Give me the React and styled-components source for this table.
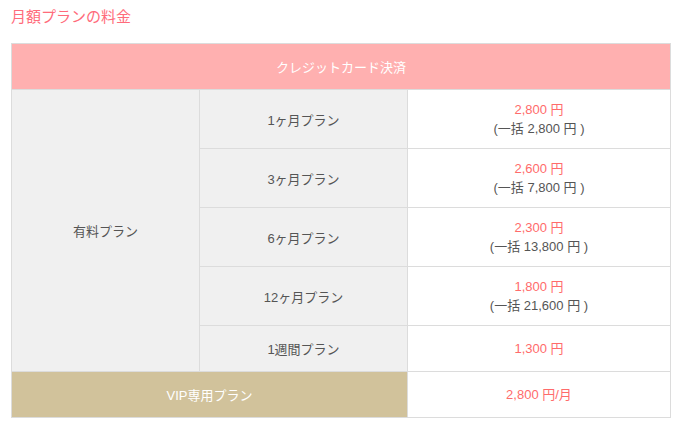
import React from 'react';
import styled, { createGlobalStyle } from 'styled-components';

const GlobalStyle = createGlobalStyle`
    body {
        margin: 0;
        background: #fff;
        font-family: "Liberation Sans", "Noto Sans CJK JP", sans-serif;
    }
`;

const plans = [
    { name: '1ヶ月プラン', price: '2,800 円', total: '(一括 2,800 円 )' },
    { name: '3ヶ月プラン', price: '2,600 円', total: '(一括 7,800 円 )' },
    { name: '6ヶ月プラン', price: '2,300 円', total: '(一括 13,800 円 )' },
    { name: '12ヶ月プラン', price: '1,800 円', total: '(一括 21,600 円 )' },
    { name: '1週間プラン', price: '1,300 円' },
];

const App = () => {
    return (
        <>
            <GlobalStyle />
            <Wrapper>
                <Title>月額プランの料金</Title>
                <PriceTable>
                    <colgroup>
                        <col style={{ width: 188 }} />
                        <col style={{ width: 208 }} />
                        <col />
                    </colgroup>
                    <tbody>
                        <tr>
                            <HeadCell colSpan={3}>クレジットカード決済</HeadCell>
                        </tr>
                        {plans.map((p, i) => (
                            <Row key={p.name} $short={!p.total}>
                                {i === 0 && <GrayCell rowSpan={plans.length}>有料プラン</GrayCell>}
                                <GrayCell>{p.name}</GrayCell>
                                <PriceCell>
                                    <Price>{p.price}</Price>
                                    {p.total && <Total>{p.total}</Total>}
                                </PriceCell>
                            </Row>
                        ))}
                        <Row $short>
                            <VipCell colSpan={2}>VIP専用プラン</VipCell>
                            <PriceCell>
                                <Price>2,800 円/月</Price>
                            </PriceCell>
                        </Row>
                    </tbody>
                </PriceTable>
            </Wrapper>
        </>
    );
}

const Wrapper = styled.div`
    padding: 4px 11px 0 11px;
    width: 660px;
`;

const Title = styled.h2`
    margin: 0 0 14px 0;
    font-size: 15px;
    font-weight: 400;
    line-height: 25px;
    color: #ff6b7b;
`;

const PriceTable = styled.table`
    width: 660px;
    border-collapse: collapse;
    table-layout: fixed;
    font-size: 13px;

    td {
        border: 1px solid #dcdcdc;
        text-align: center;
        vertical-align: middle;
        padding: 0;
    }
`;

const Row = styled.tr`
    height: ${p => (p.$short ? '46px' : '59px')};
`;

const HeadCell = styled.td`
    height: 45px;
    background: #ffb0b0;
    color: #fff;
`;

const GrayCell = styled.td`
    background: #f0f0f0;
    color: #555;
`;

const VipCell = styled.td`
    background: #d1c29b;
    color: #fff;
`;

const PriceCell = styled.td`
    background: #fff;
    line-height: 19px;
`;

const Price = styled.div`
    color: #ff6b6b;
`;

const Total = styled.div`
    color: #555;
`;

export default App;
